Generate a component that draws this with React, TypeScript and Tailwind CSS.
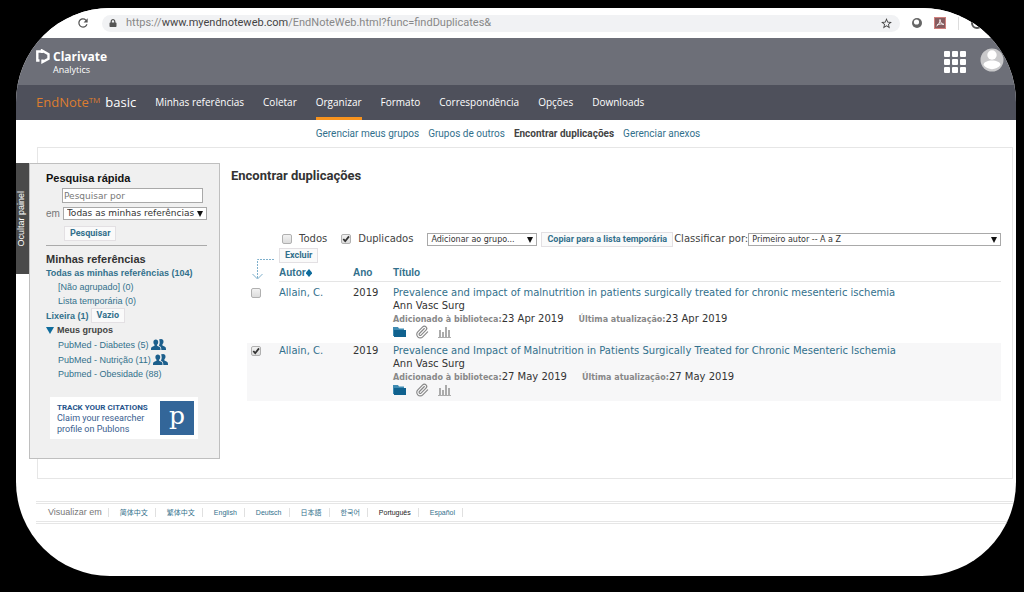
import type { ReactNode } from "react";
import { clsx } from "clsx";
import { Paperclip } from "lucide-react";
import { FaLock } from "react-icons/fa";
import { MdRefresh, MdStarBorder } from "react-icons/md";

const navItems = ["Minhas referências", "Coletar", "Organizar", "Formato", "Correspondência", "Opções", "Downloads"];
const subItems = ["Gerenciar meus grupos", "Grupos de outros", "Encontrar duplicações", "Gerenciar anexos"];
const languages = ["简体中文", "繁体中文", "English", "Deutsch", "日本語", "한국어", "Português", "Español"];

const references = [
  {
    id: "ref-1",
    author: "Allain, C.",
    year: "2019",
    title: "Prevalence and impact of malnutrition in patients surgically treated for chronic mesenteric ischemia",
    journal: "Ann Vasc Surg",
    date: "23 Apr 2019",
    checked: false,
  },
  {
    id: "ref-2",
    author: "Allain, C.",
    year: "2019",
    title: "Prevalence and Impact of Malnutrition in Patients Surgically Treated for Chronic Mesenteric Ischemia",
    journal: "Ann Vasc Surg",
    date: "27 May 2019",
    checked: true,
  },
];

function Checkbox({ id, label, checked }: { id: string; label?: string; checked?: boolean }) {
  return (
    <span className="relative block size-[10px] shrink-0">
      <input
        id={id}
        type="checkbox"
        aria-label={label}
        defaultChecked={checked}
        className="peer block size-[10px] appearance-none rounded-xs border border-[#b0b0b0] bg-gradient-to-b from-[#f2f2f2] to-[#dcdcdc]"
      />
      <svg viewBox="0 0 10 10" className="pointer-events-none absolute inset-0 hidden peer-checked:block">
        <path d="M2.3 5 4.2 7.2 8 2.4" fill="none" stroke="#333" strokeWidth="1.8" />
      </svg>
    </span>
  );
}

function Select({ label, option, className }: { label: string; option: string; className: string }) {
  return (
    <span className={clsx("relative block", className)}>
      <select
        aria-label={label}
        className="block h-[13px] w-full appearance-none border border-[#a9a9a9] bg-white pl-[3px] font-['DejaVu_Sans',sans-serif] leading-[11px] text-[#333]"
      >
        <option>{option}</option>
      </select>
      <svg viewBox="0 0 6 6" className="pointer-events-none absolute top-[4px] right-[4px] size-[6px]">
        <path d="M0 0h6L3 6z" fill="#111" />
      </svg>
    </span>
  );
}

function Button({ children, className }: { children: ReactNode; className?: string }) {
  return (
    <button
      type="button"
      className={clsx(
        "block shrink-0 border border-[#e3e0e3] bg-[#fafafa] px-[5px] font-['Roboto',sans-serif] text-[9px] leading-[13px] font-bold whitespace-nowrap text-[#32708c]",
        className,
      )}
    >
      {children}
    </button>
  );
}

function GroupIcon() {
  return (
    <svg viewBox="0 0 15 11" className="h-[11px] w-[15px]" fill="#1c5f8c">
      <path d="M4.800 0.500c1.500 0 2.400 1 2.400 2.600 0 1.300-.5 2.200-1.100 2.700v1l2.600 1.300c.7.400.8 1.200.8 2.900H0c0-1.700.1-2.500.8-2.900l2.700-1.300v-1C2.900 5.300 2.400 4.400 2.400 3.100 2.400 1.500 3.300.5 4.800.5Z" />
      <path d="M10 0c1.600 0 2.500 1 2.500 2.600 0 1.300-.5 2.200-1.100 2.700v1.200l2.600 1.300c.8.400 1 1.200 1 3.200h-4.700c0-2-.2-3-1.100-3.600L7.800 6.600c.5-.8.9-2 .9-3.400 0-1.100-.3-2-.7-2.600C8.500.2 9.200 0 10 0Z" />
    </svg>
  );
}

function RecordIcons() {
  return (
    <div className="flex h-[14px] items-center gap-[9px]">
      <svg viewBox="0 0 13 12" className="h-[12px] w-[13px]">
        <path d="M0 1h5l1 1.500h5V4H2v6H0z" fill="#3f8bb2" />
        <path d="M1 4h12v7H1z" fill="#10628f" />
      </svg>
      <Paperclip className="size-[14px] text-[#888]" />
      <svg viewBox="0 0 13 11" className="h-[11px] w-[13px]" fill="#ababab">
        <path d="M1 3h2v7H1zM4 5h2v5H4zM7 0h2v10H7zM10 3h2v7h-2zM0 10h13v1H0z" />
      </svg>
    </div>
  );
}

function AddressBar() {
  return (
    <div className="flex h-[30px] items-center gap-[12px] bg-white pr-[25px] pl-[60px]">
      <button type="button" aria-label="Recarregar">
        <MdRefresh className="size-[14px] text-[#555]" />
      </button>
      <div className="flex h-[17px] min-w-0 flex-1 items-center gap-[9px] rounded-full bg-[#f1f2f4] pr-[7px] pl-[7px]">
        <FaLock className="size-[8px] text-[#555]" />
        <div className="flex-1 font-['Roboto',sans-serif] text-[11px] whitespace-nowrap text-[#888]">
          https://<span className="text-[#444]">www.myendnoteweb.com</span>/EndNoteWeb.html?func=findDuplicates&amp;
        </div>
        <MdStarBorder className="size-[13px] text-[#444]" />
      </div>
      <svg viewBox="0 0 10 10" className="size-[10px]">
        <circle cx="5" cy="5" r="5" fill="#666" />
        <circle cx="4.500" cy="4" r="2.600" fill="#fff" />
      </svg>
      <svg viewBox="0 0 12 12" className="size-[12px]">
        <path d="M0 0h12v12H0z" fill="#d07f7c" />
        <path d="M1 1h10v10H1z" fill="#865b5e" />
        <path d="M2.500 9C5 7.500 6 5 6 2.500 6.200 5.500 7.500 7 10 7.500M3 8c2-1 4-1.200 6.500-.8" fill="none" stroke="#fff" strokeWidth=".9" />
      </svg>
      <span className="h-[13px] w-px bg-[#ddd]" />
      <svg viewBox="0 0 12 12" className="mr-[8px] size-[12px]">
        <circle cx="6" cy="6" r="5" fill="none" stroke="#555" strokeWidth="2" />
        <path d="M3 4h6v3H3z" fill="#555" />
      </svg>
    </div>
  );
}

function Header() {
  return (
    <header className="font-['Open_Sans',sans-serif] text-white">
      <div className="flex h-[47px] items-start bg-[#6d6f78] pr-[12px] pl-[20px]">
        <svg viewBox="0 0 14 15" className="mt-[11px] h-[15px] w-[14px]" fill="none" stroke="#fff" strokeWidth="2.400">
          <path d="M5 2.500H1.300v9h2.200" />
          <path d="M6 4V1.500l6.500 3.800v4.400L6.500 13v-2.500" />
        </svg>
        <div className="mt-[11px] ml-[3px]">
          <div className="text-[12px] leading-[15px] font-bold">Clarivate</div>
          <div className="text-[9px] leading-[11px] font-medium">Analytics</div>
        </div>
        <button type="button" aria-label="Aplicativos" className="mt-[13px] ml-auto grid grid-cols-3 gap-[2px]">
          {Array.from({ length: 9 }, (_, i) => (
            <span key={i} className="size-[6px] rounded-[1px] bg-white" />
          ))}
        </button>
        <button type="button" aria-label="Perfil" className="mt-[10px] ml-[14px]">
          <svg viewBox="0 0 24 24" className="size-[24px]">
            <circle cx="12" cy="12" r="11.500" fill="#c9c9cb" />
            <circle cx="12" cy="7" r="4.700" fill="#fff" />
            <path d="M3.500 17c0-3 4-4.500 8.500-4.500s8.500 1.500 8.500 4.500c-4 5.500-13 5.500-17 0Z" fill="#fff" />
          </svg>
        </button>
      </div>
      <nav className="flex h-[35px] items-stretch gap-[19px] bg-[#4e505b] pl-[20px]">
        <a href="#" className="flex items-center gap-[5px] text-[13px] whitespace-nowrap">
          <span className="text-[#dd7d2f]">
            EndNote<sup className="text-[8px]">TM</sup>
          </span>
          <span className="font-medium">basic</span>
        </a>
        {navItems.map((item) => (
          <a
            key={item}
            href="#"
            className={clsx(
              "flex items-center border-y-3 border-t-transparent text-[10px] font-medium whitespace-nowrap",
              item === "Organizar" ? "border-b-[#f7931e]" : "border-b-transparent",
            )}
          >
            {item}
          </a>
        ))}
      </nav>
    </header>
  );
}

function Sidebar() {
  return (
    <aside className="-ml-[23px] flex shrink-0 items-start pt-[15px]">
      <button
        type="button"
        className="flex h-[111px] w-[14px] items-center justify-center bg-[#4a4a4a] text-[9px] text-white"
      >
        <span className="rotate-180 whitespace-nowrap [writing-mode:vertical-rl]">Ocultar painel</span>
      </button>
      <div className="w-[191px] border border-[#bfbfbf] bg-[#f0f0f0] pt-[7px] pr-[12px] pb-[19px] pl-[16px]">
        <h2 className="text-[11px] leading-[14px] font-bold text-[#111]">Pesquisa rápida</h2>
        <input
          type="text"
          aria-label="Pesquisar por"
          placeholder="Pesquisar por"
          className="mt-[3px] ml-[16px] block h-[15px] w-[141px] border border-[#a9a9a9] bg-white px-px font-['DejaVu_Sans',sans-serif] text-[9px] placeholder:text-[#777]"
        />
        <div className="mt-[4px] flex items-center gap-[3px]">
          <span className="text-[10px] leading-[13px] text-[#777]">em</span>
          <Select label="em" option="Todas as minhas referências" className="min-w-0 flex-1 text-[9px]" />
        </div>
        <Button className="mt-[6px] ml-[18px]">Pesquisar</Button>

        <h2 className="mt-[4px] border-t border-[#aaa] pt-[6px] text-[11px] leading-[14px] font-bold text-[#333]">
          Minhas referências
        </h2>
        <div className="text-[9px] leading-[14px] text-[#32708c]">
          <a href="#" className="block font-bold">Todas as minhas referências (104)</a>
          <a href="#" className="ml-[12px] block">[Não agrupado] (0)</a>
          <a href="#" className="ml-[12px] block">Lista temporária (0)</a>
          <div className="flex items-center gap-[2px]">
            <a href="#" className="font-bold">Lixeira (1)</a>
            <Button>Vazio</Button>
          </div>
          <button type="button" className="flex items-center gap-[3px] font-bold text-[#444]">
            <svg viewBox="0 0 8 7" className="h-[7px] w-[8px]">
              <path d="M0 0h8L4 7z" fill="#0f6c9c" />
            </svg>
            Meus grupos
          </button>
          <div className="ml-[12px] flex h-[15px] items-center gap-[2px]">
            <a href="#">PubMed - Diabetes (5)</a>
            <GroupIcon />
          </div>
          <div className="ml-[12px] flex h-[15px] items-center gap-[2px]">
            <a href="#">PubMed - Nutrição (11)</a>
            <GroupIcon />
          </div>
          <a href="#" className="ml-[12px] block">Pubmed - Obesidade (88)</a>
        </div>

        <a
          href="#"
          className="mt-[16px] ml-[4px] flex h-[42px] w-[148px] items-center justify-between bg-white pr-[4px] pl-[7px] font-['Roboto',sans-serif] text-[9px] leading-[11px] text-[#3a608f]"
        >
          <span>
            <span className="block text-[8px] font-bold text-[#27558c]">TRACK YOUR CITATIONS</span>
            Claim your researcher
            <br />
            profile on Publons
          </span>
          <span className="flex size-[34px] items-center justify-center bg-[#336699] pb-[6px] font-['DejaVu_Serif',serif] text-[25px] text-white">
            p
          </span>
        </a>
      </div>
    </aside>
  );
}

function ReferenceTable() {
  return (
    <table className="w-full table-fixed border-separate border-spacing-0 text-left text-[10px] leading-[13px]">
      <colgroup>
        <col className="w-[32px]" />
        <col className="w-[74px]" />
        <col className="w-[40px]" />
        <col />
      </colgroup>
      <thead>
        <tr>
          <td rowSpan={2} className="pt-[9px] pl-[4px] align-top">
            <svg viewBox="0 0 23 24" className="h-[24px] w-[23px]" fill="none" stroke="#7fb0cc">
              <path d="M23 2.500H6.500V22" strokeDasharray="2 1" />
              <path d="m1.500 17 5 5 5-5" />
            </svg>
          </td>
          <td colSpan={3}>
            <Button>Excluir</Button>
          </td>
        </tr>
        <tr className="font-['Liberation_Sans',Arial,sans-serif] text-[#32708c]">
          <th className="border-b border-[#e5e5e5] pt-[3px] pb-[2px]">
            <button type="button" className="flex items-center">
              Autor
              <svg viewBox="0 0 6 8" className="h-[8px] w-[6px]">
                <path d="M3 0l3 3.500v1L3 8 0 4.500v-1z" fill="#0f6c9c" />
              </svg>
            </button>
          </th>
          <th className="border-b border-[#e5e5e5] pt-[3px] pb-[2px]">Ano</th>
          <th className="border-b border-[#e5e5e5] pt-[3px] pb-[2px]">Título</th>
        </tr>
      </thead>
      <tbody className="font-['DejaVu_Sans',sans-serif] text-[#333]">
        {references.map((ref) => (
          <tr
            key={ref.id}
            className={clsx("align-top first:*:border-t-3 first:*:border-transparent", ref.checked && "bg-[#f7f7f8]")}
          >
            <td className="pt-[3px] pl-[4px]">
              <Checkbox id={ref.id} label={ref.title} checked={ref.checked} />
            </td>
            <td className="pt-px">
              <a href="#" className="text-[#32708c]">{ref.author}</a>
            </td>
            <td className="pt-px">{ref.year}</td>
            <td className="pt-px pb-[4px] whitespace-nowrap">
              <a href="#" className="block text-[#32708c]">{ref.title}</a>
              <div>{ref.journal}</div>
              <div className="flex gap-[15px]">
                <span>
                  <b className="text-[8px] leading-none text-[#888]">Adicionado à biblioteca:</b>
                  {ref.date}
                </span>
                <span>
                  <b className="text-[8px] leading-none text-[#888]">Última atualização:</b>
                  {ref.date}
                </span>
              </div>
              <RecordIcons />
            </td>
          </tr>
        ))}
      </tbody>
    </table>
  );
}

export default function App() {
  return (
    <div className="min-h-screen bg-black pt-[8px] pr-[8px] pb-[16px] pl-[16px] font-['Liberation_Sans',Arial,sans-serif]">
      <div className="min-h-[568px] overflow-hidden rounded-[94px] bg-white">
        <AddressBar />
        <Header />
        <nav className="flex h-[27px] items-center justify-center gap-[9px] pr-[16px] font-['Roboto',sans-serif] text-[10px] whitespace-nowrap">
          {subItems.map((item) => (
            <a
              key={item}
              href="#"
              className={item === "Encontrar duplicações" ? "font-bold text-[#444]" : "text-[#32708c]"}
            >
              {item}
            </a>
          ))}
        </nav>

        <div className="mr-[3px] ml-[21px] flex min-h-[332px] border border-[#e6e6e6]">
          <Sidebar />
          <main className="min-w-0 flex-1 pt-[20px] pr-[11px] pl-[11px]">
            <h1 className="font-['Roboto',sans-serif] text-[13px] leading-[16px] font-bold text-[#333]">
              Encontrar duplicações
            </h1>
            <div className="mt-[46px] pl-[16px]">
              <div className="flex items-center pl-[35px] font-['DejaVu_Sans',sans-serif] text-[10px] leading-[18px] whitespace-nowrap text-[#444]">
                <Checkbox id="all" />
                <label htmlFor="all" className="mr-[14px] ml-[7px]">Todos</label>
                <Checkbox id="duplicates" checked />
                <label htmlFor="duplicates" className="mr-[14px] ml-[7px]">Duplicados</label>
                <Select label="Adicionar ao grupo" option="Adicionar ao grupo..." className="w-[110px] text-[8px]" />
                <Button className="mr-px ml-[4px]">Copiar para a lista temporária</Button>
                <span>Classificar por:</span>
                <Select label="Classificar por" option="Primeiro autor -- A a Z" className="min-w-0 flex-1 text-[8px]" />
              </div>
              <ReferenceTable />
            </div>
          </main>
        </div>

        <footer className="mt-[22px] mr-[3px] ml-[20px] border-y border-[#e6e6e6] py-px">
          <div className="flex h-[19px] items-center border-y border-[#e6e6e6] pl-[12px] text-[7px] leading-[9px] text-[#32708c]">
            <span className="border-r border-[#e0e0e0] pr-[6px] text-[9px] text-[#777]">Visualizar em</span>
            {languages.map((lang) => (
              <a
                key={lang}
                href="#"
                className={clsx(
                  "border-r border-[#e0e0e0] pr-[7px] pl-[11px] font-['Liberation_Sans','Noto_Sans_CJK_SC','Noto_Sans_CJK_KR',sans-serif]",
                  lang === "Português" && "text-[#222]",
                )}
              >
                {lang}
              </a>
            ))}
          </div>
        </footer>
      </div>
    </div>
  );
}
